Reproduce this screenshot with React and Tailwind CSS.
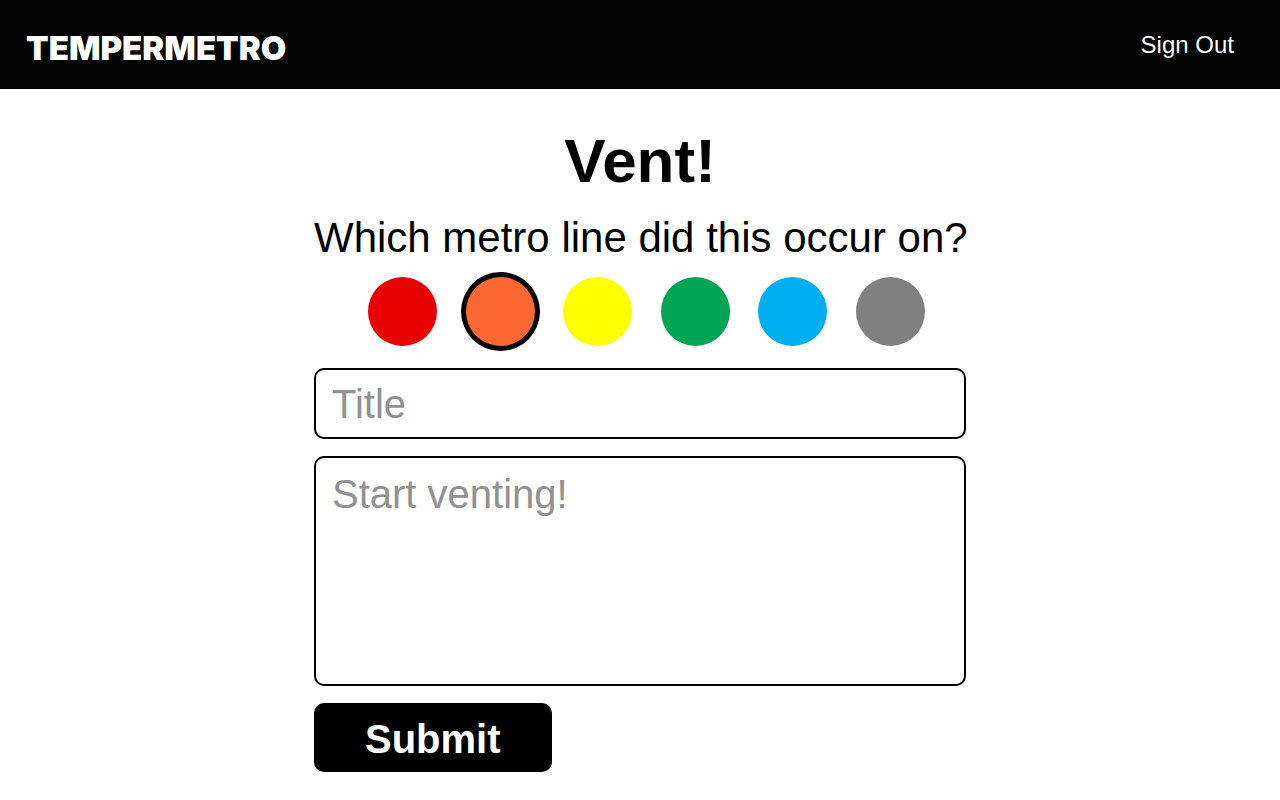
import { useState } from "react";

const lines = [
  { name: "Red", color: "bg-[#e60000]" },
  { name: "Orange", color: "bg-[#fd6731]" },
  { name: "Yellow", color: "bg-[#ffff00]" },
  { name: "Green", color: "bg-[#00a553]" },
  { name: "Blue", color: "bg-[#00adef]" },
  { name: "Silver", color: "bg-[#808080]" },
];

function Header() {
  return (
    <header className="flex items-center justify-between border-b border-black bg-[#050505] pt-[26px] pr-[46px] pb-6 pl-[26px] text-white">
      <a
        href="#home"
        className="pt-1.5 font-['Arial_Black','Inter',sans-serif] text-[33px] leading-8 font-black"
      >
        TEMPERMETRO
      </a>
      <a href="#sign-out" className="text-2xl leading-8">
        Sign Out
      </a>
    </header>
  );
}

function LinePicker() {
  const [selected, setSelected] = useState("Orange");
  return (
    <fieldset className="min-w-0">
      <legend className="text-[42px] leading-[50px] sm:whitespace-nowrap">
        Which metro line did this occur on?
      </legend>
      <div className="mt-3.5 flex justify-between pr-[41px] pl-[54px]">
        {lines.map((line) => (
          <label key={line.name} className="flex">
            <input
              type="radio"
              name="line"
              value={line.name}
              aria-label={line.name}
              checked={selected === line.name}
              onChange={() => setSelected(line.name)}
              className={`size-[69px] cursor-pointer appearance-none rounded-full ring-black checked:ring-[5px] ${line.color}`}
            />
          </label>
        ))}
      </div>
    </fieldset>
  );
}

export default function App() {
  return (
    <div className="min-h-screen bg-white font-['Liberation_Sans',Arial,sans-serif] text-black">
      <Header />
      <main className="mx-auto w-full max-w-[652px] pt-9 pb-7">
        <h1 className="text-center text-[62px] leading-[72px] font-bold">Vent!</h1>
        <form className="mt-4 flex flex-col" onSubmit={(e) => e.preventDefault()}>
          <LinePicker />
          <input
            type="text"
            aria-label="Title"
            placeholder="Title"
            className="mt-[22px] w-full rounded-[10px] border-2 border-black px-4 pt-[11px] pb-[9px] text-[40px] leading-[47px] placeholder:text-[#919191]"
          />
          <textarea
            rows={4}
            aria-label="Start venting!"
            placeholder="Start venting!"
            className="mt-[17px] block w-full resize-none rounded-[10px] border-2 border-black px-4 pt-[13px] pb-[25px] text-[40px] leading-[47px] placeholder:text-[#919191]"
          />
          <button
            type="submit"
            className="mt-[17px] self-start rounded-[10px] bg-black px-[51px] pt-[13px] pb-[9px] text-[40px] leading-[47px] font-bold text-white"
          >
            Submit
          </button>
        </form>
      </main>
    </div>
  );
}
